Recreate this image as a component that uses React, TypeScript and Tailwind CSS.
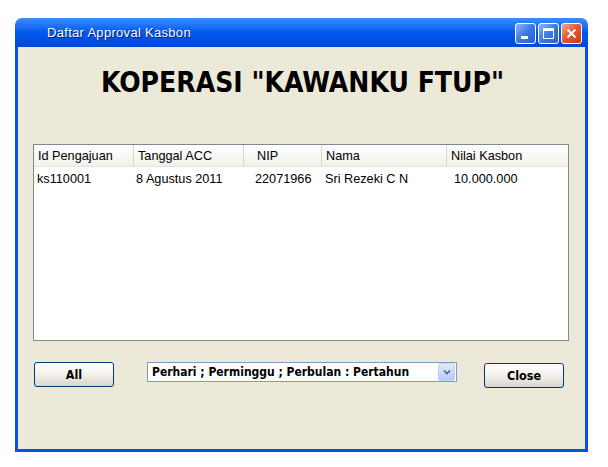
import React from 'react';

const rows = [
  { id: 'ks110001', tgl: '8 Agustus 2011', nip: '22071966', nama: 'Sri Rezeki C N', nilai: '10.000.000' },
];

const TitleButton = ({ kind }: { kind: 'min' | 'max' | 'close' }) => {
  const base =
    'w-[21px] h-[21px] rounded-[3px] border border-white flex items-center justify-center';
  if (kind === 'close') {
    return (
      <div className={`${base} bg-gradient-to-br from-[#f0a58a] via-[#e1552e] to-[#c83c16]`}>
        <svg width="11" height="11" viewBox="0 0 11 11">
          <path d="M1.5 1.5 L9.5 9.5 M9.5 1.5 L1.5 9.5" stroke="white" strokeWidth="2" />
        </svg>
      </div>
    );
  }
  return (
    <div className={`${base} bg-gradient-to-br from-[#8fb3f5] via-[#3b78e8] to-[#2a5fd4]`}>
      {kind === 'min' ? (
        <div className="w-[7px] h-[3px] bg-white mt-[8px] -ml-[3px]" />
      ) : (
        <div className="w-[11px] h-[11px] border border-white border-t-[3px]" />
      )}
    </div>
  );
};

const XpButton = ({ label }: { label: string }) => (
  <button className="w-[80px] h-[25px] rounded-[3px] border border-[#003c74] bg-gradient-to-b from-white via-[#f2f1ec] to-[#d9d5cb] text-[12.5px] font-bold text-black font-['DejaVu_Sans_Condensed',sans-serif] leading-none pt-[2px]">
    {label}
  </button>
);

export default function App() {
  return (
    <div className="w-[608px] h-[467px] bg-white pt-[18px] pl-[15px]">
      <div className="w-[573px] h-[434px] flex flex-col">
        {/* title bar */}
        <div className="h-[29px] rounded-t-[7px] bg-gradient-to-b from-[#3b8cff] via-[#0058ee] to-[#0047d6] flex items-center pl-[32px] pr-[6px] shrink-0">
          <span className="text-white text-[13px] font-['Liberation_Sans',sans-serif] [text-shadow:1px_1px_0_#0a1e60] tracking-[0.3px]">
            Daftar Approval Kasbon
          </span>
          <div className="ml-auto flex gap-[2px] mt-[1px]">
            <TitleButton kind="min" />
            <TitleButton kind="max" />
            <TitleButton kind="close" />
          </div>
        </div>

        {/* body */}
        <div className="flex-1 bg-[#ece9d8] border-[3px] border-t-0 border-[#0452e0] flex flex-col">
          <h1 className="mt-[18px] h-[36px] text-center text-[28px] font-bold text-black font-['DejaVu_Sans_Condensed',sans-serif] leading-[36px] pl-[2px]">
            KOPERASI "KAWANKU FTUP"
          </h1>

          {/* table */}
          <div className="ml-[15px] mt-[43px] w-[536px] h-[197px] bg-white border border-[#828790] font-['Liberation_Sans',sans-serif] text-[12.7px] text-black">
            <div className="h-[22px] flex border-b border-[#e3e2da] bg-gradient-to-b from-white to-[#f1f0ea]">
              <div className="w-[100px] pl-[4px] pt-[3px] flex items-center border-r border-[#d8d6cc]">Id Pengajuan</div>
              <div className="w-[110px] pl-[4px] pt-[3px] flex items-center border-r border-[#d8d6cc]">Tanggal ACC</div>
              <div className="w-[78px] pl-[13px] pt-[3px] flex items-center border-r border-[#d8d6cc]">NIP</div>
              <div className="w-[125px] pl-[4px] pt-[3px] flex items-center border-r border-[#d8d6cc]">Nama</div>
              <div className="flex-1 pl-[4px] pt-[3px] flex items-center">Nilai Kasbon</div>
            </div>
            {rows.map((r) => (
              <div key={r.id} className="h-[22px] pt-[3px] flex items-center">
                <div className="w-[100px] pl-[3px]">{r.id}</div>
                <div className="w-[110px] pl-[2px]">{r.tgl}</div>
                <div className="w-[78px] pl-[11px]">{r.nip}</div>
                <div className="w-[125px] pl-[3px]">{r.nama}</div>
                <div className="flex-1 pl-[7px]">{r.nilai}</div>
              </div>
            ))}
          </div>

          {/* bottom controls */}
          <div className="mt-[21px] flex items-start ml-[16px]">
            <XpButton label="All" />
            <div className="ml-[33px] w-[310px] h-[20px] bg-white border border-[#7f9db9] flex items-center">
              <span className="flex-1 pl-[4px] text-[12px] font-bold text-black font-['DejaVu_Sans_Condensed',sans-serif] leading-none">
                Perhari ; Perminggu ; Perbulan : Pertahun
              </span>
              <div className="w-[17px] h-[18px] mr-[1px] rounded-[2px] bg-gradient-to-b from-[#dfe9fd] to-[#b5cbf5] border border-[#c3d3f8] flex items-center justify-center">
                <svg width="8" height="6" viewBox="0 0 8 6">
                  <path d="M1 1.5 L4 4.5 L7 1.5" stroke="#4d6185" strokeWidth="1.6" fill="none" />
                </svg>
              </div>
            </div>
            <div className="ml-[27px]">
              <XpButton label="Close" />
            </div>
          </div>
        </div>
      </div>
    </div>
  );
}
